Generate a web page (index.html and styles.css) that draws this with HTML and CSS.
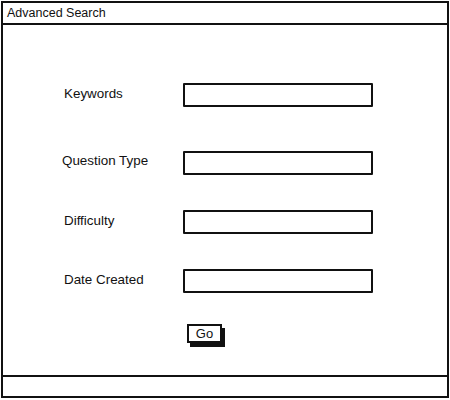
FILE: index.html
```html
<!DOCTYPE html>
<html>
<head>
<meta charset="utf-8">
<link rel="stylesheet" href="styles.css">
</head>
<body>
<div class="window">
  <div class="titlebar">Advanced Search</div>
  <div class="content">
    <div class="row row-first">
      <span class="label">Keywords</span>
      <div class="input"></div>
    </div>
    <div class="row">
      <span class="label label-shift">Question Type</span>
      <div class="input"></div>
    </div>
    <div class="row">
      <span class="label">Difficulty</span>
      <div class="input"></div>
    </div>
    <div class="row">
      <span class="label">Date Created</span>
      <div class="input"></div>
    </div>
    <div class="actions">
      <div class="button">Go</div>
    </div>
  </div>
  <div class="footer"></div>
</div>
</body>
</html>
```
FILE: styles.css
```css
html, body {
  margin: 0;
  padding: 0;
  background: #fff;
}
body {
  font-family: "Liberation Sans", Arial, sans-serif;
  color: #111;
}
.window {
  box-sizing: border-box;
  margin: 1px 0 0 1px;
  width: 448px;
  height: 397px;
  border: 2px solid #111;
  display: flex;
  flex-direction: column;
}
.titlebar {
  box-sizing: border-box;
  height: 22px;
  border-bottom: 2px solid #111;
  padding: 3px 0 0 4px;
  font-size: 12.5px;
  line-height: 15px;
}
.content {
  flex: 1;
  padding: 58px 0 0 61px;
  display: flex;
  flex-direction: column;
}
.row {
  display: flex;
  align-items: center;
  height: 24px;
  margin-bottom: 35px;
}
.row-first {
  margin-bottom: 44px;
}
.label {
  width: 119px;
  font-size: 13.4px;
  line-height: 16px;
  padding-bottom: 2px;
}
.label-shift {
  margin-left: -2px;
  width: 121px;
  padding-bottom: 5px;
}
.input {
  box-sizing: border-box;
  width: 190px;
  height: 24px;
  border: 2px solid #111;
  border-radius: 1px;
  background: #fff;
}
.actions {
  margin-top: -4px;
  padding-left: 123px;
}
.button {
  box-sizing: border-box;
  width: 35px;
  height: 19px;
  border: 2px solid #111;
  background: #fff;
  box-shadow: 3px 4px 0 #111;
  font-size: 13px;
  line-height: 15px;
  text-align: center;
}
.footer {
  box-sizing: border-box;
  height: 21px;
  border-top: 2px solid #111;
}
```
